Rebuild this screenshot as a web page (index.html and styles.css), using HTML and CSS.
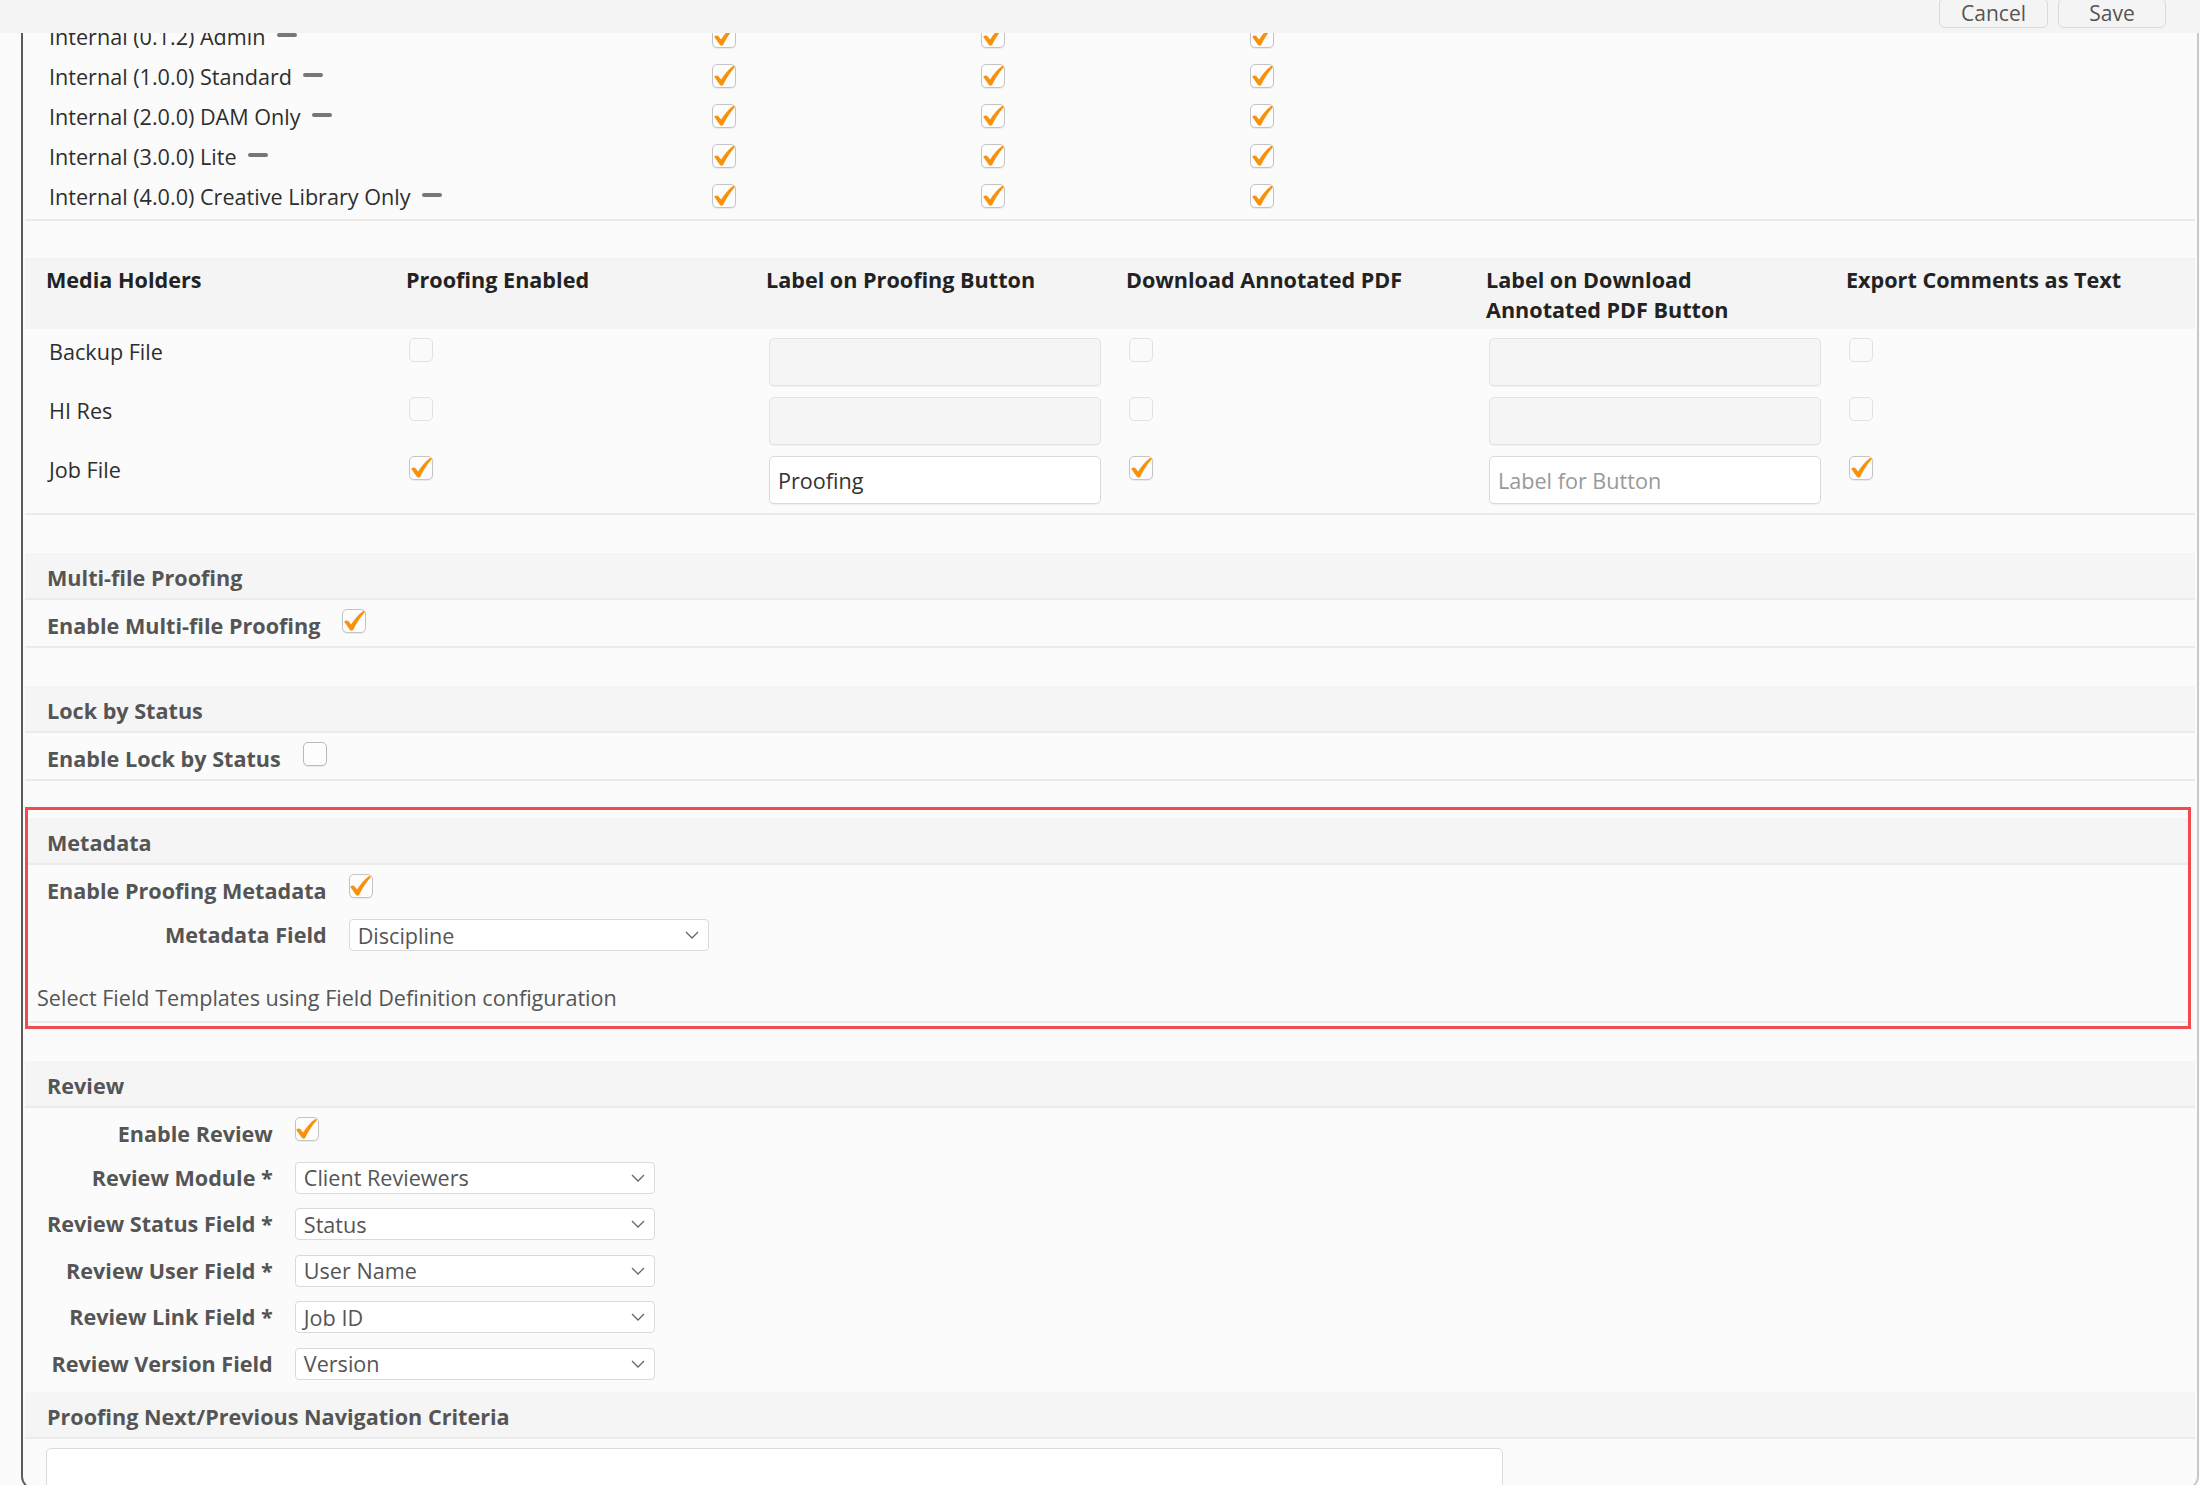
FILE: index.html
```html
<!DOCTYPE html>
<html lang="en">
<head>
  <meta charset="UTF-8">
  <meta name="viewport" content="width=device-width, initial-scale=1.0">
  <title>Proofing Settings</title>
  <link rel="stylesheet" href="styles.css">
</head>
<body>
  <div class="topbar">
    <button class="btn">Cancel</button>
    <button class="btn">Save</button>
  </div>

  <div class="dialog">
    <!-- profiles -->
    <div class="profiles">
      <div class="profile-row">
        <div class="profile-name">Internal (0.1.2) Admin<span class="minus"></span></div>
        <div><span class="cb"><svg viewBox="0 0 24 24"><path d="M2.2 12.8c1.4-1.4 3.2-1.7 4.3-.5l2.6 3.2C12.3 10.2 16.2 5.6 20.8 2.2c1.2-.9 2.6.3 1.6 1.5-4.4 5-8.1 10.6-11 16.8-.7 1.4-2.5 1.6-3.4.4z"/></svg></span></div>
        <div><span class="cb"><svg viewBox="0 0 24 24"><path d="M2.2 12.8c1.4-1.4 3.2-1.7 4.3-.5l2.6 3.2C12.3 10.2 16.2 5.6 20.8 2.2c1.2-.9 2.6.3 1.6 1.5-4.4 5-8.1 10.6-11 16.8-.7 1.4-2.5 1.6-3.4.4z"/></svg></span></div>
        <div><span class="cb"><svg viewBox="0 0 24 24"><path d="M2.2 12.8c1.4-1.4 3.2-1.7 4.3-.5l2.6 3.2C12.3 10.2 16.2 5.6 20.8 2.2c1.2-.9 2.6.3 1.6 1.5-4.4 5-8.1 10.6-11 16.8-.7 1.4-2.5 1.6-3.4.4z"/></svg></span></div>
      </div>
      <div class="profile-row">
        <div class="profile-name">Internal (1.0.0) Standard<span class="minus"></span></div>
        <div><span class="cb"><svg viewBox="0 0 24 24"><path d="M2.2 12.8c1.4-1.4 3.2-1.7 4.3-.5l2.6 3.2C12.3 10.2 16.2 5.6 20.8 2.2c1.2-.9 2.6.3 1.6 1.5-4.4 5-8.1 10.6-11 16.8-.7 1.4-2.5 1.6-3.4.4z"/></svg></span></div>
        <div><span class="cb"><svg viewBox="0 0 24 24"><path d="M2.2 12.8c1.4-1.4 3.2-1.7 4.3-.5l2.6 3.2C12.3 10.2 16.2 5.6 20.8 2.2c1.2-.9 2.6.3 1.6 1.5-4.4 5-8.1 10.6-11 16.8-.7 1.4-2.5 1.6-3.4.4z"/></svg></span></div>
        <div><span class="cb"><svg viewBox="0 0 24 24"><path d="M2.2 12.8c1.4-1.4 3.2-1.7 4.3-.5l2.6 3.2C12.3 10.2 16.2 5.6 20.8 2.2c1.2-.9 2.6.3 1.6 1.5-4.4 5-8.1 10.6-11 16.8-.7 1.4-2.5 1.6-3.4.4z"/></svg></span></div>
      </div>
      <div class="profile-row">
        <div class="profile-name">Internal (2.0.0) DAM Only<span class="minus"></span></div>
        <div><span class="cb"><svg viewBox="0 0 24 24"><path d="M2.2 12.8c1.4-1.4 3.2-1.7 4.3-.5l2.6 3.2C12.3 10.2 16.2 5.6 20.8 2.2c1.2-.9 2.6.3 1.6 1.5-4.4 5-8.1 10.6-11 16.8-.7 1.4-2.5 1.6-3.4.4z"/></svg></span></div>
        <div><span class="cb"><svg viewBox="0 0 24 24"><path d="M2.2 12.8c1.4-1.4 3.2-1.7 4.3-.5l2.6 3.2C12.3 10.2 16.2 5.6 20.8 2.2c1.2-.9 2.6.3 1.6 1.5-4.4 5-8.1 10.6-11 16.8-.7 1.4-2.5 1.6-3.4.4z"/></svg></span></div>
        <div><span class="cb"><svg viewBox="0 0 24 24"><path d="M2.2 12.8c1.4-1.4 3.2-1.7 4.3-.5l2.6 3.2C12.3 10.2 16.2 5.6 20.8 2.2c1.2-.9 2.6.3 1.6 1.5-4.4 5-8.1 10.6-11 16.8-.7 1.4-2.5 1.6-3.4.4z"/></svg></span></div>
      </div>
      <div class="profile-row">
        <div class="profile-name">Internal (3.0.0) Lite<span class="minus"></span></div>
        <div><span class="cb"><svg viewBox="0 0 24 24"><path d="M2.2 12.8c1.4-1.4 3.2-1.7 4.3-.5l2.6 3.2C12.3 10.2 16.2 5.6 20.8 2.2c1.2-.9 2.6.3 1.6 1.5-4.4 5-8.1 10.6-11 16.8-.7 1.4-2.5 1.6-3.4.4z"/></svg></span></div>
        <div><span class="cb"><svg viewBox="0 0 24 24"><path d="M2.2 12.8c1.4-1.4 3.2-1.7 4.3-.5l2.6 3.2C12.3 10.2 16.2 5.6 20.8 2.2c1.2-.9 2.6.3 1.6 1.5-4.4 5-8.1 10.6-11 16.8-.7 1.4-2.5 1.6-3.4.4z"/></svg></span></div>
        <div><span class="cb"><svg viewBox="0 0 24 24"><path d="M2.2 12.8c1.4-1.4 3.2-1.7 4.3-.5l2.6 3.2C12.3 10.2 16.2 5.6 20.8 2.2c1.2-.9 2.6.3 1.6 1.5-4.4 5-8.1 10.6-11 16.8-.7 1.4-2.5 1.6-3.4.4z"/></svg></span></div>
      </div>
      <div class="profile-row">
        <div class="profile-name">Internal (4.0.0) Creative Library Only<span class="minus"></span></div>
        <div><span class="cb"><svg viewBox="0 0 24 24"><path d="M2.2 12.8c1.4-1.4 3.2-1.7 4.3-.5l2.6 3.2C12.3 10.2 16.2 5.6 20.8 2.2c1.2-.9 2.6.3 1.6 1.5-4.4 5-8.1 10.6-11 16.8-.7 1.4-2.5 1.6-3.4.4z"/></svg></span></div>
        <div><span class="cb"><svg viewBox="0 0 24 24"><path d="M2.2 12.8c1.4-1.4 3.2-1.7 4.3-.5l2.6 3.2C12.3 10.2 16.2 5.6 20.8 2.2c1.2-.9 2.6.3 1.6 1.5-4.4 5-8.1 10.6-11 16.8-.7 1.4-2.5 1.6-3.4.4z"/></svg></span></div>
        <div><span class="cb"><svg viewBox="0 0 24 24"><path d="M2.2 12.8c1.4-1.4 3.2-1.7 4.3-.5l2.6 3.2C12.3 10.2 16.2 5.6 20.8 2.2c1.2-.9 2.6.3 1.6 1.5-4.4 5-8.1 10.6-11 16.8-.7 1.4-2.5 1.6-3.4.4z"/></svg></span></div>
      </div>
    </div>

    <!-- media holders -->
    <div class="media-table">
      <div class="mt-head">
        <div>Media Holders</div>
        <div>Proofing Enabled</div>
        <div>Label on Proofing Button</div>
        <div>Download Annotated PDF</div>
        <div>Label on Download<br>Annotated PDF Button</div>
        <div>Export Comments as Text</div>
      </div>
      <div class="mt-body">
        <div class="mt-row">
          <div class="mt-name">Backup File</div>
          <div><span class="cb off"></span></div>
          <div><input class="field" type="text" disabled></div>
          <div><span class="cb off"></span></div>
          <div><input class="field" type="text" disabled></div>
          <div><span class="cb off"></span></div>
        </div>
        <div class="mt-row">
          <div class="mt-name">HI Res</div>
          <div><span class="cb off"></span></div>
          <div><input class="field" type="text" disabled></div>
          <div><span class="cb off"></span></div>
          <div><input class="field" type="text" disabled></div>
          <div><span class="cb off"></span></div>
        </div>
        <div class="mt-row">
          <div class="mt-name">Job File</div>
          <div><span class="cb"><svg viewBox="0 0 24 24"><path d="M2.2 12.8c1.4-1.4 3.2-1.7 4.3-.5l2.6 3.2C12.3 10.2 16.2 5.6 20.8 2.2c1.2-.9 2.6.3 1.6 1.5-4.4 5-8.1 10.6-11 16.8-.7 1.4-2.5 1.6-3.4.4z"/></svg></span></div>
          <div><input class="field" type="text" value="Proofing"></div>
          <div><span class="cb"><svg viewBox="0 0 24 24"><path d="M2.2 12.8c1.4-1.4 3.2-1.7 4.3-.5l2.6 3.2C12.3 10.2 16.2 5.6 20.8 2.2c1.2-.9 2.6.3 1.6 1.5-4.4 5-8.1 10.6-11 16.8-.7 1.4-2.5 1.6-3.4.4z"/></svg></span></div>
          <div><input class="field" type="text" placeholder="Label for Button"></div>
          <div><span class="cb"><svg viewBox="0 0 24 24"><path d="M2.2 12.8c1.4-1.4 3.2-1.7 4.3-.5l2.6 3.2C12.3 10.2 16.2 5.6 20.8 2.2c1.2-.9 2.6.3 1.6 1.5-4.4 5-8.1 10.6-11 16.8-.7 1.4-2.5 1.6-3.4.4z"/></svg></span></div>
        </div>
      </div>
    </div>

    <!-- multi-file -->
    <div class="section">
      <div class="section-head">Multi-file Proofing</div>
      <div class="section-body">
        <div class="form-grid">
          <label class="check-label">Enable Multi-file Proofing</label>
          <span class="cb"><svg viewBox="0 0 24 24"><path d="M2.2 12.8c1.4-1.4 3.2-1.7 4.3-.5l2.6 3.2C12.3 10.2 16.2 5.6 20.8 2.2c1.2-.9 2.6.3 1.6 1.5-4.4 5-8.1 10.6-11 16.8-.7 1.4-2.5 1.6-3.4.4z"/></svg></span>
        </div>
      </div>
    </div>

    <!-- lock by status -->
    <div class="section">
      <div class="section-head">Lock by Status</div>
      <div class="section-body">
        <div class="form-grid">
          <label class="check-label">Enable Lock by Status</label>
          <span class="cb empty"></span>
        </div>
      </div>
    </div>

    <!-- metadata -->
    <div class="highlight">
      <div class="section">
        <div class="section-head">Metadata</div>
        <div class="section-body">
          <div class="form-grid">
            <label class="check-label">Enable Proofing Metadata</label>
            <span class="cb"><svg viewBox="0 0 24 24"><path d="M2.2 12.8c1.4-1.4 3.2-1.7 4.3-.5l2.6 3.2C12.3 10.2 16.2 5.6 20.8 2.2c1.2-.9 2.6.3 1.6 1.5-4.4 5-8.1 10.6-11 16.8-.7 1.4-2.5 1.6-3.4.4z"/></svg></span>
            <label>Metadata Field</label>
            <div class="select">Discipline<svg viewBox="0 0 14 8"><path d="M1 1l6 6 6-6"/></svg></div>
          </div>
          <p class="note">Select Field Templates using Field Definition configuration</p>
        </div>
      </div>
    </div>

    <!-- review -->
    <div class="section review">
      <div class="section-head">Review</div>
      <div class="section-body">
        <div class="form-grid">
          <label class="check-label">Enable Review</label>
          <span class="cb"><svg viewBox="0 0 24 24"><path d="M2.2 12.8c1.4-1.4 3.2-1.7 4.3-.5l2.6 3.2C12.3 10.2 16.2 5.6 20.8 2.2c1.2-.9 2.6.3 1.6 1.5-4.4 5-8.1 10.6-11 16.8-.7 1.4-2.5 1.6-3.4.4z"/></svg></span>
          <label>Review Module *</label>
          <div class="select">Client Reviewers<svg viewBox="0 0 14 8"><path d="M1 1l6 6 6-6"/></svg></div>
          <label>Review Status Field *</label>
          <div class="select">Status<svg viewBox="0 0 14 8"><path d="M1 1l6 6 6-6"/></svg></div>
          <label>Review User Field *</label>
          <div class="select">User Name<svg viewBox="0 0 14 8"><path d="M1 1l6 6 6-6"/></svg></div>
          <label>Review Link Field *</label>
          <div class="select">Job ID<svg viewBox="0 0 14 8"><path d="M1 1l6 6 6-6"/></svg></div>
          <label>Review Version Field</label>
          <div class="select">Version<svg viewBox="0 0 14 8"><path d="M1 1l6 6 6-6"/></svg></div>
        </div>
      </div>
    </div>

    <!-- navigation criteria -->
    <div class="section nav-criteria">
      <div class="section-head">Proofing Next/Previous Navigation Criteria</div>
      <div class="section-body">
        <textarea class="criteria"></textarea>
      </div>
    </div>
  </div>
</body>
</html>
```

FILE: styles.css
```css
* {
  margin: 0;
  padding: 0;
  box-sizing: border-box;
}

html, body {
  height: 100%;
  overflow: hidden;
}

body {
  background: #fbfbfb;
  font-family: "Open Sans", "Liberation Sans", sans-serif;
  font-size: 21.6px;
  color: #2e2e2e;
}

.topbar {
  position: relative;
  z-index: 2;
  height: 33px;
  display: flex;
  justify-content: flex-end;
  align-items: flex-end;
  gap: 10px;
  padding: 0 34px 5px 0;
  background: #f4f4f4;
}

.btn {
  height: 30px;
  min-width: 108px;
  padding: 0 21px;
  font: 21px/28px "Open Sans", sans-serif;
  color: #555;
  background: #f4f4f4;
  border: 1px solid #d9d9d9;
  border-radius: 6px;
}

.dialog {
  margin: -17px 0 0 21px;
  width: 2178px;
  height: 1474px;
  padding: 0 2px;
  border-left: 2px solid #5a5a5a;
  border-right: 2px solid #c9c9c9;
  border-bottom: 2px solid #c9c9c9;
  border-radius: 0 0 14px 14px;
  overflow: hidden;
}

/* checkbox */
.cb {
  display: inline-flex;
  flex: none;
  width: 24px;
  height: 24px;
  border: 1.5px solid #c4c4c4;
  border-radius: 5px;
  background: #fdfdfd;
  box-shadow: 0 1px 1px rgba(0, 0, 0, .07);
}
.cb svg {
  width: 24px;
  height: 24px;
  margin: -1.5px;
  overflow: visible;
}
.cb path {
  fill: #f7920f;
}
.cb.off {
  border-color: #e2e2e2;
  background: #fafafa;
  box-shadow: none;
}
.cb.empty {
  border-color: #bababa;
}

/* profiles */
.profiles {
  padding-bottom: 3px;
  border-bottom: 2px solid #ebebeb;
}
.profile-row {
  display: grid;
  grid-template-columns: 687px 269px 269px 269px;
  height: 40px;
  align-items: center;
}
.profile-row > div {
  display: flex;
  align-items: center;
}
.profile-row > .profile-name {
  display: block;
  padding-left: 24px;
}
.minus {
  display: inline-block;
  width: 20px;
  height: 4px;
  margin-left: 11px;
  background: #777;
  border-radius: 2px;
  vertical-align: 8px;
}

/* media holders table */
.media-table {
  margin-top: 37px;
  border-bottom: 2px solid #ebebeb;
}
.mt-head,
.mt-row {
  display: grid;
  grid-template-columns: repeat(6, 360px);
}
.mt-head {
  padding: 6px 0 4px;
  background: #f4f4f4;
  border-top: 1px solid #efefef;
  line-height: 30px;
  font-weight: 700;
  color: #222;
}
.mt-head div {
  padding-left: 21px;
}
.mt-body {
  display: flex;
  flex-direction: column;
  gap: 11px;
  padding: 9px 0;
}
.mt-row {
  height: 48px;
}
.mt-row > div {
  display: flex;
  align-items: flex-start;
  padding-left: 24px;
}
.mt-name {
  line-height: 28px;
}

.field {
  width: 332px;
  height: 48px;
  padding: 0 8px;
  font: 21.6px "Open Sans", sans-serif;
  color: #333;
  background: #fff;
  border: 1.5px solid #dadada;
  border-radius: 5px;
  box-shadow: 0 1px 1px rgba(0, 0, 0, .05);
}
.field:disabled {
  background: #f5f5f5;
  border-color: #e3e3e3;
}
.field::placeholder {
  color: #999;
}

/* sections */
.section {
  margin-top: 38px;
  border-bottom: 2px solid #ebebeb;
}
.section-head {
  height: 47px;
  padding: 10px 22px 0;
  line-height: 30px;
  font-weight: 700;
  color: #555;
  background: #f5f5f5;
  border-bottom: 2px solid #ebebeb;
}
.section-body {
  padding: 7px 22px 7px;
}

.form-grid {
  display: grid;
  grid-template-columns: auto auto;
  grid-auto-rows: 32px;
  justify-content: start;
  align-items: center;
  column-gap: 22px;
  row-gap: 15px;
}
.form-grid label {
  line-height: 32px;
  text-align: right;
  font-weight: 700;
  color: #555;
}
.form-grid .check-label {
  padding-top: 6px;
}
.form-grid .cb {
  margin-top: -4px;
}

.select {
  width: 360px;
  height: 32px;
  display: flex;
  align-items: center;
  justify-content: space-between;
  padding: 0 9px 0 8px;
  color: #555;
  background: #fff;
  border: 1.5px solid #dadada;
  border-radius: 4px;
}
.select svg {
  width: 14px;
  height: 8px;
}
.select path {
  fill: none;
  stroke: #666;
  stroke-width: 1.3;
}

/* highlighted block */
.highlight {
  margin: 26px 4px 0 0;
  padding: 8px 0 3px;
  border: 3px solid #f04c4f;
}
.highlight .section {
  margin-top: 0;
}
.highlight .section-head,
.highlight .section-body {
  padding-left: 19px;
}
.highlight .section-body {
  padding-bottom: 8px;
}
.note {
  margin: 32px 0 0 -10px;
  line-height: 30px;
  color: #555;
}

.review {
  margin-top: 32px;
  border-bottom: none;
}
.review .form-grid {
  row-gap: 14.5px;
}
.review .section-body {
  padding-bottom: 12px;
}

.nav-criteria {
  margin-top: 0;
  border-bottom: none;
}
.nav-criteria .section-body {
  padding: 9px 21px 0;
}
.criteria {
  display: block;
  width: 1457px;
  height: 90px;
  background: #fff;
  border: 1.5px solid #dadada;
  border-radius: 5px;
  resize: none;
}
```
